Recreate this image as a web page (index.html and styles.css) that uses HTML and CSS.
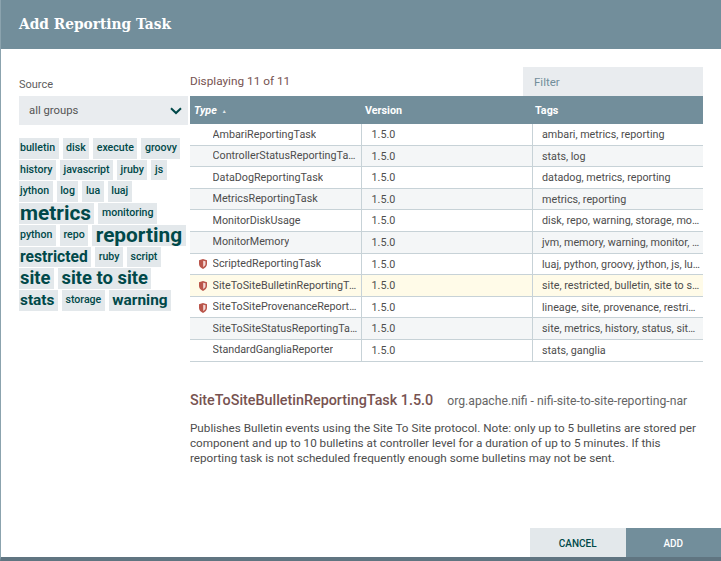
FILE: index.html
```html
<!DOCTYPE html>
<html lang="en">
<head>
  <meta charset="UTF-8" />
  <title>Add Reporting Task</title>
  <link rel="stylesheet" href="styles.css">
</head>
<body>
  <div class="dialog">
    <div class="dialog-header">Add Reporting Task</div>

    <div class="dialog-content">
      <div class="filters">
        <div class="source-label">Source</div>
        <div class="source-select">
          <span>all groups</span>
          <svg class="chevron" width="12" height="8" viewBox="0 0 12 8"><path d="M1 1.2 6 6l5-4.800" fill="none" stroke="#004849" stroke-width="2"/></svg>
        </div>
        <div class="tag-cloud">
          <div class="tag-list">
            <span class="tag">bulletin</span>
            <span class="tag">disk</span>
            <span class="tag">execute</span>
            <span class="tag">groovy</span>
            <span class="tag">history</span>
            <span class="tag">javascript</span>
            <span class="tag">jruby</span>
            <span class="tag">js</span>
            <span class="tag">jython</span>
            <span class="tag">log</span>
            <span class="tag">lua</span>
            <span class="tag">luaj</span>
            <span class="tag size-xl">metrics</span>
            <span class="tag">monitoring</span>
            <span class="tag">python</span>
            <span class="tag">repo</span>
            <span class="tag size-xl">reporting</span>
            <span class="tag size-l">restricted</span>
            <span class="tag">ruby</span>
            <span class="tag">script</span>
            <span class="tag size-s">site</span>
            <span class="tag size-s">site to site</span>
            <span class="tag size-m">stats</span>
            <span class="tag">storage</span>
            <span class="tag size-m">warning</span>
          </div>
        </div>
      </div>

      <div class="main">
        <div class="table-top">
          <div class="count">Displaying 11 of 11</div>
          <div class="filter">Filter</div>
        </div>

        <div class="grid">
          <div class="row head">
            <div class="cell c-type"><em>Type</em> <span class="sort">▲</span></div>
            <div class="cell c-version">Version</div>
            <div class="cell c-tags">Tags</div>
          </div>
          <div class="row">
            <div class="cell c-type"><span class="shield-slot"></span><span class="name">AmbariReportingTask</span></div>
            <div class="cell c-version">1.5.0</div>
            <div class="cell c-tags">ambari, metrics, reporting</div>
          </div>
          <div class="row even">
            <div class="cell c-type"><span class="shield-slot"></span><span class="name">ControllerStatusReportingTask</span></div>
            <div class="cell c-version">1.5.0</div>
            <div class="cell c-tags">stats, log</div>
          </div>
          <div class="row">
            <div class="cell c-type"><span class="shield-slot"></span><span class="name">DataDogReportingTask</span></div>
            <div class="cell c-version">1.5.0</div>
            <div class="cell c-tags">datadog, metrics, reporting</div>
          </div>
          <div class="row even">
            <div class="cell c-type"><span class="shield-slot"></span><span class="name">MetricsReportingTask</span></div>
            <div class="cell c-version">1.5.0</div>
            <div class="cell c-tags">metrics, reporting</div>
          </div>
          <div class="row">
            <div class="cell c-type"><span class="shield-slot"></span><span class="name">MonitorDiskUsage</span></div>
            <div class="cell c-version">1.5.0</div>
            <div class="cell c-tags">disk, repo, warning, storage, monitoring</div>
          </div>
          <div class="row even">
            <div class="cell c-type"><span class="shield-slot"></span><span class="name">MonitorMemory</span></div>
            <div class="cell c-version">1.5.0</div>
            <div class="cell c-tags">jvm, memory, warning, monitor, heap</div>
          </div>
          <div class="row">
            <div class="cell c-type"><span class="shield-slot"><svg width="8" height="10" viewBox="0 0 9 11"><path d="M0 1.200 4.500 0 9 1.200V5.500C9 8 7 10 4.500 11 2 10 0 8 0 5.500Z" fill="#ba554a"/><path d="M4.700 1.800 7.300 2.400V5.500C7.300 7 6 8.300 4.700 9Z" fill="#f3d9d6"/></svg></span><span class="name">ScriptedReportingTask</span></div>
            <div class="cell c-version">1.5.0</div>
            <div class="cell c-tags">luaj, python, groovy, jython, js, lua, ruby</div>
          </div>
          <div class="row selected">
            <div class="cell c-type"><span class="shield-slot"><svg width="8" height="10" viewBox="0 0 9 11"><path d="M0 1.200 4.500 0 9 1.200V5.500C9 8 7 10 4.500 11 2 10 0 8 0 5.500Z" fill="#ba554a"/><path d="M4.700 1.800 7.300 2.400V5.500C7.300 7 6 8.300 4.700 9Z" fill="#f3d9d6"/></svg></span><span class="name">SiteToSiteBulletinReportingTask</span></div>
            <div class="cell c-version">1.5.0</div>
            <div class="cell c-tags">site, restricted, bulletin, site to site, reporting</div>
          </div>
          <div class="row">
            <div class="cell c-type"><span class="shield-slot"><svg width="8" height="10" viewBox="0 0 9 11"><path d="M0 1.200 4.500 0 9 1.200V5.500C9 8 7 10 4.500 11 2 10 0 8 0 5.500Z" fill="#ba554a"/><path d="M4.700 1.800 7.300 2.400V5.500C7.300 7 6 8.300 4.700 9Z" fill="#f3d9d6"/></svg></span><span class="name">SiteToSiteProvenanceReportingTask</span></div>
            <div class="cell c-version">1.5.0</div>
            <div class="cell c-tags">lineage, site, provenance, restricted, reporting</div>
          </div>
          <div class="row even">
            <div class="cell c-type"><span class="shield-slot"></span><span class="name">SiteToSiteStatusReportingTask</span></div>
            <div class="cell c-version">1.5.0</div>
            <div class="cell c-tags">site, metrics, history, status, site to site</div>
          </div>
          <div class="row">
            <div class="cell c-type"><span class="shield-slot"></span><span class="name">StandardGangliaReporter</span></div>
            <div class="cell c-version">1.5.0</div>
            <div class="cell c-tags">stats, ganglia</div>
          </div>
        </div>

        <div class="details">
          <div class="details-head">
            <span class="details-title">SiteToSiteBulletinReportingTask 1.5.0</span>
            <span class="details-bundle">org.apache.nifi - nifi-site-to-site-reporting-nar</span>
          </div>
          <p class="details-text">Publishes Bulletin events using the Site To Site protocol. Note: only up to 5 bulletins are stored per component and up to 10 bulletins at controller level for a duration of up to 5 minutes. If this reporting task is not scheduled frequently enough some bulletins may not be sent.</p>
        </div>
      </div>
    </div>

    <div class="dialog-footer">
      <button class="btn cancel">CANCEL</button>
      <button class="btn add">ADD</button>
    </div>
  </div>
</body>
</html>
```

FILE: styles.css
```css
html, body {
  margin: 0;
  height: 100%;
}

body {
  font-family: Roboto, "Noto Sans", sans-serif;
  background: #fff;
  overflow: hidden;
}

.dialog {
  width: 721px;
  height: 561px;
  display: flex;
  flex-direction: column;
  box-sizing: border-box;
  border-left: 1px solid #8ba3ae;
  border-bottom: 4px solid #607581;
}

.dialog-header {
  height: 49px;
  flex: none;
  box-sizing: border-box;
  padding: 12px 0 0 18px;
  background: #728e9b;
  color: #fff;
  font-family: "DejaVu Serif Condensed", "DejaVu Serif", serif;
  font-stretch: condensed;
  font-size: 15.300px;
  font-weight: bold;
  line-height: 24px;
}

.dialog-content {
  flex: 1;
  display: flex;
  min-height: 0;
}

.filters {
  width: 169px;
  flex: none;
  margin-left: 18px;
  padding-top: 29px;
}

.source-label {
  font-size: 11px;
  line-height: 14px;
  color: #262626;
  opacity: 0.75;
}

.source-select {
  height: 29px;
  margin-top: 4px;
  padding: 0 6px 0 10px;
  display: flex;
  align-items: center;
  justify-content: space-between;
  background: #e9ecef;
  font-size: 11.300px;
  color: #555;
}

.tag-cloud {
  margin-top: 13px;
  overflow: hidden;
}

/* the first tag of every line is clipped by the cloud's left edge */
.tag-list {
  margin-left: -2.500px;
  display: flex;
  flex-wrap: wrap;
  align-items: flex-start;
  gap: 1px 4px;
}

.tag {
  padding: 0 3.500px;
  background: #e3e8eb;
  color: #004849;
  font-size: 10.600px;
  font-weight: 500;
  line-height: 20.700px;
}

.size-m {
  font-size: 15.400px;
  font-weight: 700;
}

.size-l {
  font-size: 15.600px;
  font-weight: 700;
}

.size-s {
  font-size: 18.400px;
  font-weight: 700;
}

.size-xl {
  font-size: 20.800px;
  font-weight: 700;
}

.main {
  width: 513px;
  flex: none;
  margin-left: 2px;
}

.table-top {
  height: 47px;
  display: flex;
  justify-content: space-between;
}

.count {
  margin-top: 25px;
  font-size: 11.800px;
  line-height: 15px;
  color: #775351;
}

.filter {
  width: 180px;
  height: 29px;
  margin-top: 18px;
  padding-left: 11px;
  box-sizing: border-box;
  background: #e9ecef;
  color: #728e9b;
  font-size: 11.500px;
  line-height: 31px;
}

.row {
  display: flex;
  height: 21.600px;
  box-sizing: border-box;
  border-bottom: 1px solid #c7d2d7;
  color: #4d4d4d;
  font-size: 10.750px;
  line-height: 20.600px;
}

.row.head {
  height: 28px;
  background: #728e9b;
  color: #fff;
  font-weight: bold;
  line-height: 28px;
  border-bottom: none;
}

.row.even {
  background: #f4f6f7;
}

.row.selected {
  background: #fffbe8;
}

.cell {
  box-sizing: border-box;
  padding-top: 1px;
  white-space: nowrap;
  overflow: hidden;
  text-overflow: ellipsis;
}

.c-type {
  width: 172px;
  display: flex;
  align-items: center;
  padding-left: 8.500px;
  padding-right: 3.500px;
  border-right: 1px solid #c7d2d7;
}

.c-version {
  width: 170px;
  padding-left: 9.500px;
}

.c-tags {
  width: 171px;
  padding-left: 9px;
  padding-right: 3px;
  border-left: 1px solid #c7d2d7;
}

.head .cell {
  border: none;
}

.head .c-type {
  padding-left: 4px;
}

.head .c-version {
  padding-left: 3px;
}

.head .c-tags {
  padding-left: 3px;
}

.sort {
  margin-left: 5px;
  font-size: 5px;
  font-weight: normal;
  opacity: 0.8;
}

.shield-slot {
  width: 14px;
  flex: none;
  display: flex;
  align-items: center;
}

.name {
  overflow: hidden;
  text-overflow: ellipsis;
}

.details {
  margin-top: 30px;
}

.details-head {
  display: flex;
  align-items: baseline;
  gap: 14px;
}

/* descenders are cut off in the original title */
.details-title {
  height: 17px;
  overflow: hidden;
  color: #775351;
  font-size: 14.350px;
  font-weight: 500;
  line-height: 18px;
}

.details-bundle {
  color: #666;
  font-size: 12.200px;
}

.details-text {
  margin: 12px 0 0;
  color: #4d4d4d;
  font-size: 11.700px;
  line-height: 15px;
}

.dialog-footer {
  height: 29px;
  flex: none;
  display: flex;
  justify-content: flex-end;
}

.btn {
  width: 95.500px;
  padding: 1px 0 0;
  border: none;
  font-family: inherit;
  font-size: 10px;
  font-weight: 500;
}

.cancel {
  background: #e3e8eb;
  color: #004849;
}

.add {
  background: #728e9b;
  color: #fff;
}
```
